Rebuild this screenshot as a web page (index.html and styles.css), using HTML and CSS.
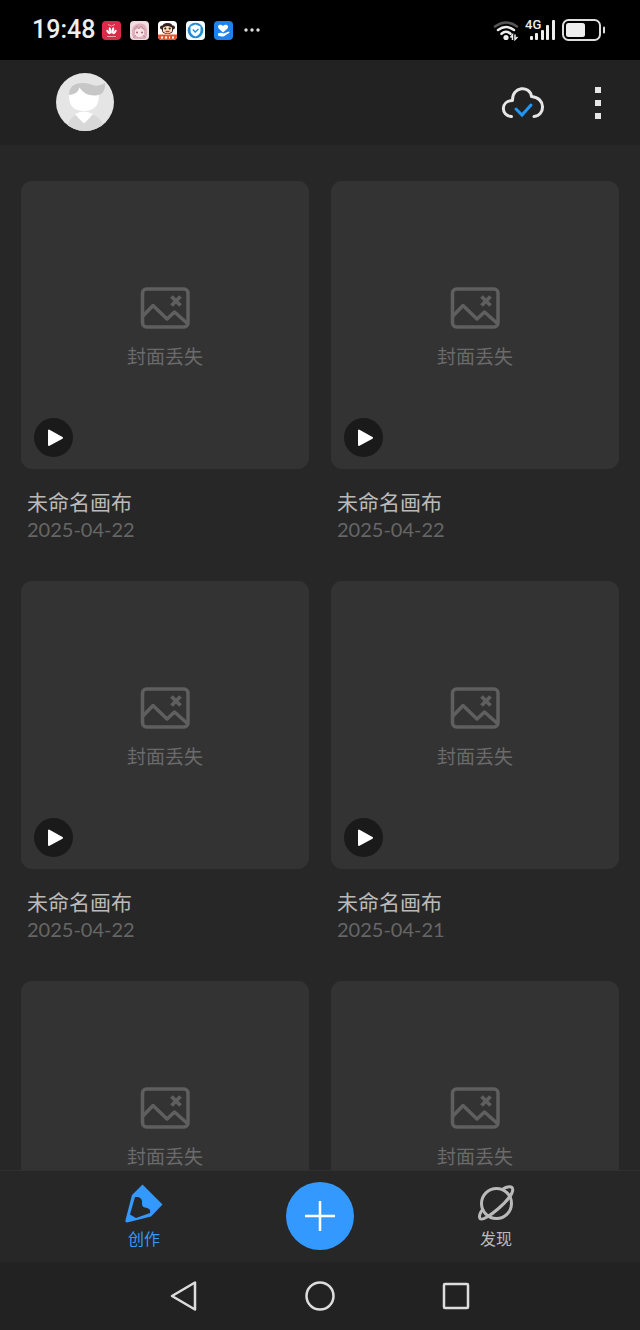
FILE: index.html
```html
<!DOCTYPE html>
<html lang="zh-CN">
<head>
<meta charset="utf-8">
<meta name="viewport" content="width=device-width, initial-scale=1">
<title>创作</title>
<link rel="stylesheet" href="styles.css">
</head>
<body>
<svg class="defs" aria-hidden="true">
  <symbol id="cover" viewBox="0 0 50 42">
    <rect x="2.500" y="2" width="45.500" height="38" rx="4" fill="none" stroke="currentColor" stroke-width="3.500"/>
    <path d="M2 30 13 18.500 27 32 34.500 25 48 37" fill="none" stroke="currentColor" stroke-width="3.500" stroke-linejoin="round"/>
    <path d="M31.500 9.500l9 9M40.500 9.500l-9 9" fill="none" stroke="currentColor" stroke-width="3.800"/>
  </symbol>
  <symbol id="play" viewBox="0 0 39 39">
    <path d="M15 12.500v14.500l13-7.200z" fill="#fff" stroke="#fff" stroke-width="2" stroke-linejoin="round"/>
  </symbol>
</svg>

<div class="status">
  <div class="status-left">
    <time class="clock">19:48</time>
    <div class="notices">
      <svg class="app-icon" viewBox="0 0 19 19">
        <rect width="19" height="19" rx="4" fill="#db2b48"/>
        <path d="M6 3.500q3.500 3 7 0" fill="none" stroke="#f6a5b0"/>
        <g fill="#fff"><ellipse cx="8.200" cy="9.500" rx="1.200" ry="3.200" transform="rotate(-12 8.200 9.500)"/><ellipse cx="10.800" cy="9.500" rx="1.200" ry="3.200" transform="rotate(12 10.800 9.500)"/><ellipse cx="6.200" cy="11" rx="1.100" ry="2.600" transform="rotate(-40 6.200 11)"/><ellipse cx="12.800" cy="11" rx="1.100" ry="2.600" transform="rotate(40 12.800 11)"/></g>
        <path d="M5 15.500h9" stroke="#f1a0ad" stroke-width="1"/>
      </svg>
      <svg class="app-icon" viewBox="0 0 19 19">
        <rect width="19" height="19" rx="4" fill="#f1dce0"/>
        <path d="M2 14Q1 3 9.500 2.500T17 14l-2 4H4z" fill="#ddb1bc"/>
        <path d="M5 9.500q4.500-5 9 0V14q-4.500 4-9 0z" fill="#f8e7e6"/>
        <path d="M4 9l3-4 2 3 2-3 4 4M3 17l3-3M16 17l-3-3" stroke="#c98d9e" fill="none"/>
        <circle cx="7" cy="11.500" r="1" fill="#a85f75"/><circle cx="12" cy="11.500" r="1" fill="#a85f75"/>
      </svg>
      <svg class="app-icon" viewBox="0 0 19 19">
        <rect width="19" height="19" rx="4" fill="#fff"/>
        <path d="M0 13.500h19v1.500a4 4 0 0 1-4 4H4a4 4 0 0 1-4-4z" fill="#e4562c"/>
        <circle cx="4" cy="6.500" r="2" fill="#38221f"/><circle cx="15" cy="6.500" r="2" fill="#38221f"/>
        <path d="M4 7q0-5 5.500-5T15 7v3q-1 3-5.500 3T4 10z" fill="#38221f"/>
        <path d="M5 6.500q4.500-3 9 0v4q-4.500 4-9 0z" fill="#ffe0be"/>
        <circle cx="7.300" cy="7.500" r="1.100" fill="#222"/><circle cx="11.700" cy="7.500" r="1.100" fill="#222"/>
        <path d="M7.500 10.500h4" stroke="#c83428" stroke-width="1.500"/>
        <path d="M3 16.500h2M7 16.500h2M11 16.500h1M14 16.500h2" stroke="#fff" stroke-width="2"/>
      </svg>
      <svg class="app-icon" viewBox="0 0 19 19">
        <rect width="19" height="19" rx="4" fill="#f4fbff"/>
        <circle cx="9.500" cy="9.500" r="7.800" fill="#238bd6"/>
        <path d="M9.500 3.500 14.500 5.500v4q0 4-5 6-5-2-5-6v-4z" fill="#fff"/>
        <path d="M6.800 8.500 9.200 11l3.300-3" fill="none" stroke="#238bd6" stroke-width="1.300"/>
      </svg>
      <svg class="app-icon" viewBox="0 0 19 19">
        <rect width="19" height="19" rx="4" fill="#1f82ea"/>
        <path d="M9 11.500 4.700 7.500C2.500 4.500 6.500 2.500 9 5c2.500-2.500 6.500-.5 4.500 2.500z" fill="#fff"/>
        <path d="M4 12.500q3-1.500 5.500 0l5.500-2q1 .5 0 1.500l-5 3.300q-3 .7-6-.8z" fill="#fff"/>
      </svg>
      <svg class="more-dots" viewBox="0 0 16 4" fill="#ddd"><circle cx="2" cy="2" r="1.700"/><circle cx="8" cy="2" r="1.700"/><circle cx="14" cy="2" r="1.700"/></svg>
    </div>
  </div>
  <svg class="signals" viewBox="0 0 116 28" role="img" aria-label="Wi-Fi、4G、电池">
    <g fill="none" stroke-width="2.500" stroke-linecap="round">
      <path d="M3 10.500q11-8 22 0" stroke="#555"/>
      <path d="M6 14q8-6 16 0M9.500 17.800q4.500-4 9 0" stroke="#eee"/>
    </g>
    <circle cx="14" cy="21.500" r="2.600" fill="#eee"/>
    <path d="M18.500 21.500l2-2.500v5M23 18.500v5l2.500-2.500" stroke="#eee" fill="none" stroke-width="1.500"/>
    <text class="net" x="33" y="13">4G</text>
    <g fill="#eee"><rect x="38" y="20" width="3" height="4" rx="1"/><rect x="43" y="17" width="3" height="7" rx="1"/><rect x="49" y="14" width="3" height="10" rx="1"/><rect x="54" y="9" width="3" height="15" rx="1"/><rect x="60" y="4" width="3" height="20" rx="1"/></g>
    <rect x="71" y="4" width="37" height="20" rx="5.500" fill="none" stroke="#ddd" stroke-width="2"/>
    <rect x="74" y="7" width="19" height="14" rx="2.500" fill="#eee"/>
    <path d="M112 11.500v5" stroke="#ddd" stroke-width="2" stroke-linecap="round"/>
  </svg>
</div>

<header class="appbar">
  <button class="plain" aria-label="个人资料">
    <svg class="avatar" viewBox="0 0 60 60">
      <defs><clipPath id="disc"><circle cx="30" cy="30" r="29"/></clipPath></defs>
      <circle cx="30" cy="30" r="29" fill="#e5e5e5"/>
      <g clip-path="url(#disc)">
        <path d="M12 60q0-15 12-18h12q12 3 14 18z" fill="#d8d8d8"/>
        <path d="M20 42q9-5 18 0-4 5-9 9.500Q24 47 20 42z" fill="#fff"/>
      </g>
      <path d="M14 22 24 14q5 7 14 8l6 1q0 16-15 16T14 24z" fill="#fff"/>
      <path d="M14 23q0-12 14-12c9 0 12 6 22 0q1 12-10 12.500-10 .5-15.500-8-2 7-10.500 7.500z" fill="#c7c7c7"/>
    </svg>
  </button>
  <div class="appbar-actions">
    <button class="plain" aria-label="云同步">
      <svg class="cloud" viewBox="0 0 44 32" fill="none" stroke-width="3" stroke-linecap="round">
        <path d="M10.500 29.500C-.5 28.500-.5 14 11.500 13.500 11 -1 29 -2 30.500 9.500c14.500 1 14 19 2.500 20" stroke="#e6e6e6" stroke-linejoin="round"/>
        <path d="M15 22l6 6 9-10" stroke="#2196f3"/>
      </svg>
    </button>
    <button class="plain" aria-label="更多">
      <svg class="kebab" viewBox="0 0 6 32" fill="#e6e6e6"><path d="M0 0h6v6H0zM0 13h6v6H0zM0 26h6v6H0z"/></svg>
    </button>
  </div>
</header>

<main class="gallery">
  <article class="item">
    <div class="tile"><svg class="cover"><use href="#cover"/></svg><span>封面丢失</span><button class="play" aria-label="播放"><svg><use href="#play"/></svg></button></div>
    <h2>未命名画布</h2><time>2025-04-22</time>
  </article>
  <article class="item">
    <div class="tile"><svg class="cover"><use href="#cover"/></svg><span>封面丢失</span><button class="play" aria-label="播放"><svg><use href="#play"/></svg></button></div>
    <h2>未命名画布</h2><time>2025-04-22</time>
  </article>
  <article class="item">
    <div class="tile"><svg class="cover"><use href="#cover"/></svg><span>封面丢失</span><button class="play" aria-label="播放"><svg><use href="#play"/></svg></button></div>
    <h2>未命名画布</h2><time>2025-04-22</time>
  </article>
  <article class="item">
    <div class="tile"><svg class="cover"><use href="#cover"/></svg><span>封面丢失</span><button class="play" aria-label="播放"><svg><use href="#play"/></svg></button></div>
    <h2>未命名画布</h2><time>2025-04-21</time>
  </article>
  <article class="item">
    <div class="tile"><svg class="cover"><use href="#cover"/></svg><span>封面丢失</span></div>
  </article>
  <article class="item">
    <div class="tile"><svg class="cover"><use href="#cover"/></svg><span>封面丢失</span></div>
  </article>
</main>

<nav class="tabs">
  <button class="plain tab active">
    <svg viewBox="0 0 40 40"><path fill="currentColor" fill-rule="evenodd" d="M18.500 1.500 38.500 21.500 27 33.500 3 39.500Q1 39.500 1.500 37L8 12zM11 14 6 31.500l6 3.500 14-5c1-3-1-5-5-5.500-3-.5-3-3-3-6 0-4-4-5-7-4.500z"/></svg>
    <span>创作</span>
  </button>
  <button class="plain add" aria-label="新建">
    <svg viewBox="0 0 30 30" stroke="#fff" stroke-width="2.500"><path d="M15 0v30M0 15h30"/></svg>
  </button>
  <button class="plain tab">
    <svg viewBox="0 0 40 40" fill="none" stroke="currentColor" stroke-width="3"><circle cx="20.500" cy="20.500" r="15"/><path d="M26 6.500C31.500 3 36 3 36.500 5.500c1.500 4-6 13-14 20S6 38 4 35.500c-1-2 0-6 3.500-10"/></svg>
    <span>发现</span>
  </button>
</nav>

<nav class="system">
  <button class="plain" aria-label="返回"><svg viewBox="0 0 32 32"><path d="M4 16 27 2.500v27z"/></svg></button>
  <button class="plain" aria-label="主页"><svg viewBox="0 0 32 32"><circle cx="16" cy="16" r="13.500"/></svg></button>
  <button class="plain" aria-label="最近任务"><svg viewBox="0 0 32 32"><rect x="4" y="4" width="24" height="24" rx="1"/></svg></button>
</nav>
</body>
</html>
```
FILE: styles.css
```css
* { box-sizing: border-box; }

body {
  margin: 0;
  height: 100vh;
  display: flex;
  flex-direction: column;
  background: #272727;
  color: #bababa;
  font-family: "Noto Sans CJK SC", sans-serif;
}

svg { display: block; }
.defs { display: none; }

.plain {
  border: 0;
  padding: 0;
  background: none;
  color: inherit;
  font: inherit;
  cursor: pointer;
}

.status {
  flex: none;
  height: 60px;
  padding: 0 32px;
  display: flex;
  align-items: center;
  justify-content: space-between;
  background: #000;
}
.status-left { display: flex; align-items: center; gap: 7px; }
.notices { display: flex; align-items: center; gap: 9px; }
.clock { font: 500 25px/32px Roboto, sans-serif; color: #eee; }
.app-icon { width: 19px; height: 19px; }
.more-dots { width: 16px; height: 4px; margin-left: 2px; }
.signals { width: 116px; height: 28px; }
.net { font: 500 13px Roboto, sans-serif; fill: #eee; }

.appbar {
  flex: none;
  height: 85px;
  padding: 0 39px 2px 55px;
  display: flex;
  align-items: center;
  justify-content: space-between;
  background: #222;
}
.avatar { width: 60px; height: 60px; }
.appbar-actions { display: flex; align-items: center; gap: 50px; padding-top: 2px; }
.cloud { width: 44px; height: 32px; }
.kebab { width: 6px; height: 32px; }

.gallery {
  flex: 1;
  min-height: 0;
  overflow: hidden;
  padding: 36px 21px 0;
  display: grid;
  grid-template-columns: 1fr 1fr;
  align-content: start;
  column-gap: 22px;
  row-gap: 39px;
}
.tile {
  position: relative;
  aspect-ratio: 1;
  padding-top: 7px;
  display: flex;
  flex-direction: column;
  align-items: center;
  justify-content: center;
  gap: 13px;
  border-radius: 11px;
  background: #333;
  color: #6a6a6a;
  font-size: 19px;
  line-height: 28px;
}
.cover { width: 50px; height: 42px; color: #5f5f5f; }
.play {
  position: absolute;
  left: 13px;
  bottom: 12px;
  width: 39px;
  height: 39px;
  padding: 0;
  border: 0;
  border-radius: 50%;
  background: #1a1a1a;
}
.play svg { width: 39px; height: 39px; }
.item h2 {
  margin: 18px 6px 0;
  font-size: 21px;
  line-height: 28px;
  font-weight: 400;
}
.item time {
  display: block;
  margin: 2px 6px 0;
  font: 20px/25px Lato, sans-serif;
  color: #666;
}

.tabs {
  flex: none;
  height: 92px;
  padding-bottom: 1px;
  display: grid;
  grid-template-columns: 45% 10% 45%;
  align-items: center;
  justify-items: center;
  border-top: 1px solid #303030;
  background: #272727;
}
.tab {
  padding-top: 3px;
  display: flex;
  flex-direction: column;
  align-items: center;
  font-size: 16px;
  line-height: 30px;
}
.tab svg { width: 40px; height: 40px; }
.tab.active { color: #3399ff; }
.add {
  width: 68px;
  height: 68px;
  display: grid;
  place-items: center;
  border-radius: 50%;
  background: #3399ff;
}
.add svg { width: 30px; height: 30px; }

.system {
  flex: none;
  height: 68px;
  display: flex;
  align-items: center;
  justify-content: center;
  gap: 104px;
  background: #222;
}
.system svg {
  width: 32px;
  height: 32px;
  fill: none;
  stroke: #ddd;
  stroke-width: 2.5;
  stroke-linejoin: round;
}
```
